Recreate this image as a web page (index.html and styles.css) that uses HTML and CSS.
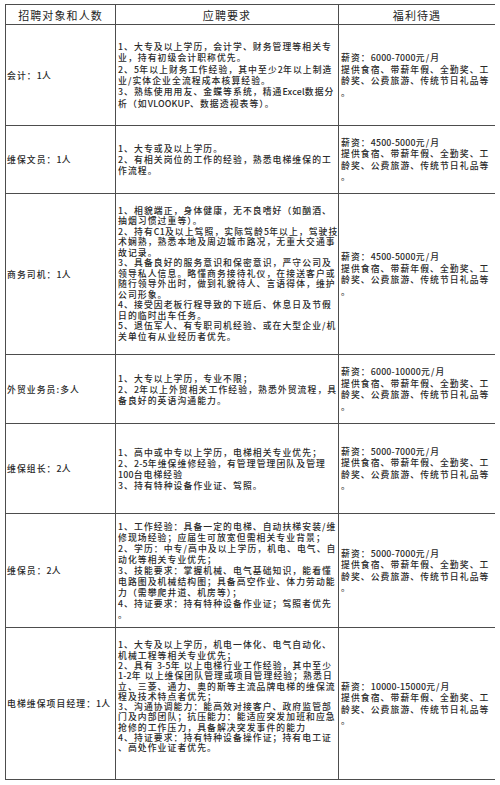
FILE: index.html
```html
<!DOCTYPE html>
<html lang="zh-CN">
<head>
<meta charset="utf-8">
<title>招聘信息</title>
<link rel="stylesheet" href="styles.css">
</head>
<body>
<table class="jobs">
  <colgroup>
    <col class="c-post">
    <col class="c-req">
    <col class="c-ben">
  </colgroup>
  <thead>
    <tr class="r-head">
      <th>招聘对象和人数</th>
      <th>应聘要求</th>
      <th>福利待遇</th>
    </tr>
  </thead>
  <tbody>
    <tr class="r1">
      <td class="post">会计：<span class="n">1</span>人</td>
      <td class="req">1、大专及以上学历，会计学、财务管理等相关专<br>业，持有初级会计职称优先。<br>2、<span class="n">5</span>年以上财务工作经验，其中至少<span class="n">2</span>年以上制造<br>业/实体企业全流程成本核算经验。<br>3、熟练使用用友、金蝶等系统，精通<span class="n">Excel</span>数据分<br>析（如<span class="n">VLOOKUP</span>、数据透视表等）。</td>
      <td class="ben">薪资：<span class="n">6000-7000</span>元/月<br>提供食宿、带薪年假、全勤奖、工<br>龄奖、公费旅游、传统节日礼品等<br>。</td>
    </tr>
    <tr class="r2">
      <td class="post">维保文员：<span class="n">1</span>人</td>
      <td class="req">1、大专或及以上学历。<br>2、有相关岗位的工作的经验，熟悉电梯维保的工<br>作流程。</td>
      <td class="ben">薪资：<span class="n">4500-5000</span>元/月<br>提供食宿、带薪年假、全勤奖、工<br>龄奖、公费旅游、传统节日礼品等<br>。</td>
    </tr>
    <tr class="r3">
      <td class="post">商务司机：<span class="n">1</span>人</td>
      <td class="req">1、相貌端正，身体健康，无不良嗜好（如酗酒、<br>抽烟习惯过重等）。<br>2、持有<span class="n">C1</span>及以上驾照，实际驾龄<span class="n">5</span>年以上，驾驶技<br>术娴熟，熟悉本地及周边城市路况，无重大交通事<br>故记录。<br>3、具备良好的服务意识和保密意识，严守公司及<br>领导私人信息。略懂商务接待礼仪，在接送客户或<br>随行领导外出时，做到礼貌待人、言语得体，维护<br>公司形象。<br>4、接受因老板行程导致的下班后、休息日及节假<br>日的临时出车任务。<br>5、退伍军人、有专职司机经验、或在大型企业/机<br>关单位有从业经历者优先。</td>
      <td class="ben">薪资：<span class="n">4500-5000</span>元/月<br>提供食宿、带薪年假、全勤奖、工<br>龄奖、公费旅游、传统节日礼品等<br>。</td>
    </tr>
    <tr class="r4">
      <td class="post">外贸业务员:多人</td>
      <td class="req">1、大专以上学历，专业不限；<br>2、<span class="n">2</span>年以上外贸相关工作经验，熟悉外贸流程，具<br>备良好的英语沟通能力。</td>
      <td class="ben">薪资：<span class="n">6000-10000</span>元/月<br>提供食宿、带薪年假、全勤奖、工<br>龄奖、公费旅游、传统节日礼品等<br>。</td>
    </tr>
    <tr class="r5">
      <td class="post">维保组长：<span class="n">2</span>人</td>
      <td class="req">1、高中或中专以上学历，电梯相关专业优先；<br>2、<span class="n">2-5</span>年维保维修经验，有管理管理团队及管理<br><span class="n">100</span>台电梯经验<br>3、持有特种设备作业证、驾照。</td>
      <td class="ben">薪资：<span class="n">5000-7000</span>元/月<br>提供食宿、带薪年假、全勤奖、工<br>龄奖、公费旅游、传统节日礼品等<br>。</td>
    </tr>
    <tr class="r6">
      <td class="post">维保员：<span class="n">2</span>人</td>
      <td class="req">1、工作经验：具备一定的电梯、自动扶梯安装/维<br>修现场经验；应届生可放宽但需相关专业背景；<br>2、学历：中专/高中及以上学历，机电、电气、自<br>动化等相关专业优先；<br>3、技能要求：掌握机械、电气基础知识，能看懂<br>电路图及机械结构图；具备高空作业、体力劳动能<br>力（需攀爬井道、机房等）；<br>4、持证要求：持有特种设备作业证；驾照者优先<br>。</td>
      <td class="ben">薪资：<span class="n">5000-7000</span>元/月<br>提供食宿、带薪年假、全勤奖、工<br>龄奖、公费旅游、传统节日礼品等<br>。</td>
    </tr>
    <tr class="r7">
      <td class="post">电梯维保项目经理：<span class="n">1</span>人</td>
      <td class="req">1、大专及以上学历，机电一体化、电气自动化、<br>机械工程等相关专业优先；<br>2、具有 <span class="n">3-5</span>年 以上电梯行业工作经验，其中至少<br><span class="n">1-2</span>年 以上维保团队管理或项目管理经验；熟悉日<br>立、三菱、通力、奥的斯等主流品牌电梯的维保流<br>程及技术特点者优先；<br>3、沟通协调能力：能高效对接客户、政府监管部<br>门及内部团队；抗压能力：能适应突发加班和应急<br>抢修的工作压力，具备解决突发事件的能力<br>4、持证要求：持有特种设备操作证；持有电工证<br>、高处作业证者优先。</td>
      <td class="ben">薪资：<span class="n">10000-15000</span>元/月<br>提供食宿、带薪年假、全勤奖、工<br>龄奖、公费旅游、传统节日礼品等<br>。</td>
    </tr>
  </tbody>
</table>
</body>
</html>
```

FILE: styles.css
```css
html, body {
  background: #ffffff;
}

body {
  margin: 4px 5px 0 5px;
  font-family: "Noto Sans CJK SC", "Noto Sans", sans-serif;
  color: #2a2a2a;
}

.jobs {
  width: 490px;
  border-collapse: collapse;
  table-layout: fixed;
  border: 1px solid #4d4d4d;
}

.c-post { width: 110px; }
.c-req { width: 223px; }
.c-ben { width: 157px; }

.jobs th,
.jobs td {
  border: 1px solid #4d4d4d;
  vertical-align: middle;
  white-space: nowrap;
  overflow: hidden;
}

.jobs th {
  font-size: 11px;
  font-weight: 400;
  letter-spacing: 1.1px;
  line-height: 14px;
  text-align: center;
  padding: 0;
  color: #1e1e1e;
}

.jobs td {
  font-size: 8.8px;
  font-weight: 500;
  letter-spacing: 1.1px;
  line-height: 11px;
  text-align: left;
  padding: 0 0 0 2px;
}

.jobs td .n {
  letter-spacing: 0.2px;
}

.jobs td.post {
  padding-left: 1px;
}

.jobs td.ben {
  line-height: 11.5px;
  padding-left: 2px;
}

.r1 td.req { line-height: 11.4px; }
.r3 td.req { line-height: 10.5px; }
.r7 td.req {
  line-height: 10.3px;
  padding-bottom: 13px;
}

.r-head { height: 20px; }
.r1 { height: 101px; }
.r2 { height: 68px; }
.r3 { height: 161px; }
.r4 { height: 69px; }
.r5 { height: 90px; }
.r6 { height: 114px; }
.r7 { height: 152px; }
```
